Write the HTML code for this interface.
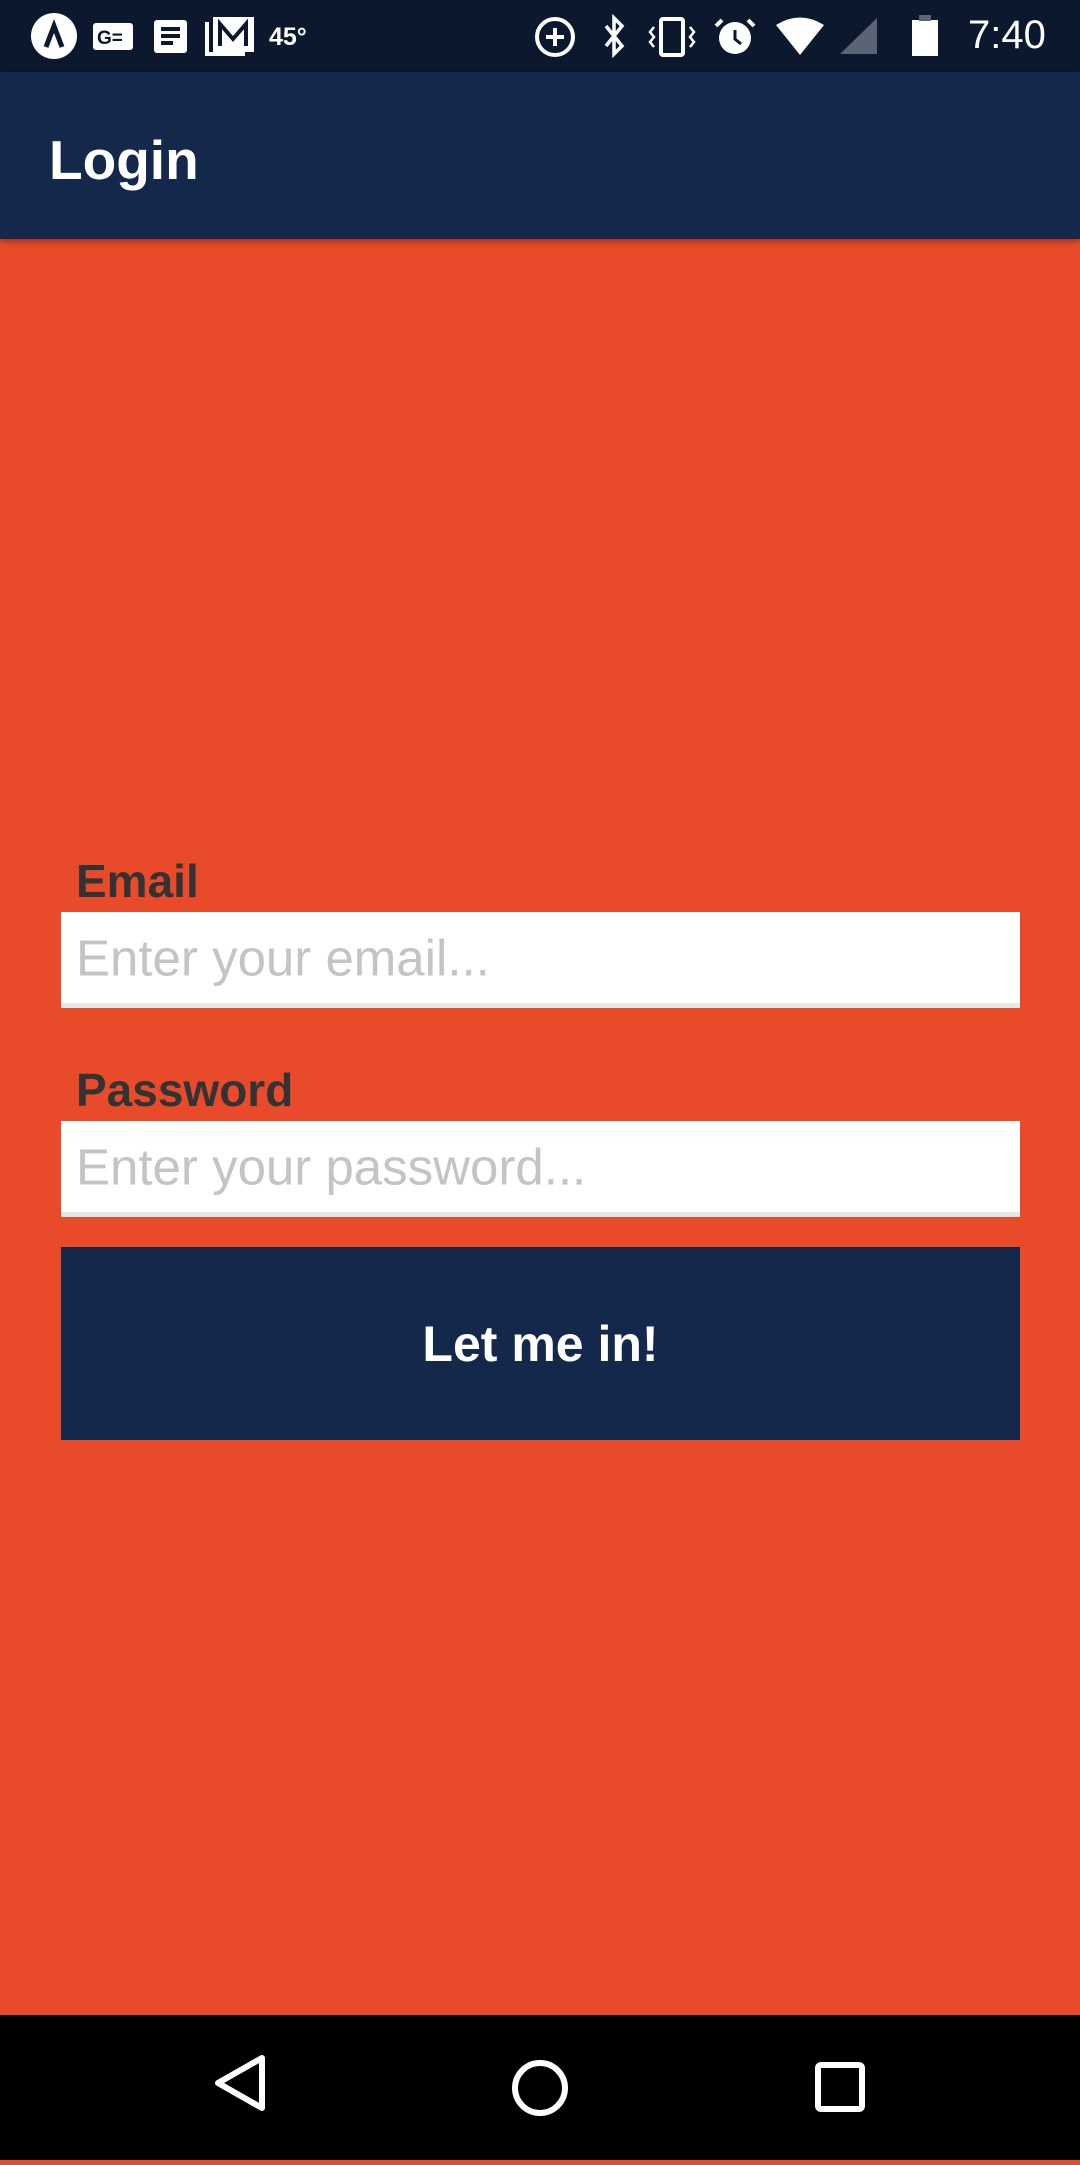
<!DOCTYPE html>
<html><head><meta charset="utf-8"><style>
*{margin:0;padding:0;box-sizing:border-box}
body{width:1080px;height:2160px;background:#E94B2A;font-family:"Liberation Sans",sans-serif;position:relative;overflow:hidden}
.sb{position:absolute;top:0;left:0;width:1080px;height:72px;background:#0C182D;color:#fff}
.ab{position:absolute;top:72px;left:0;width:1080px;height:167px;background:#14284B;box-shadow:0 3px 6px rgba(0,0,0,.3)}
.ab span{position:absolute;left:49px;top:124px;transform:translateY(-50%);font-size:55px;font-weight:bold;color:#fff;top:88px}
.lbl{position:absolute;left:76px;font-size:46px;font-weight:bold;color:#333}
.inp{position:absolute;left:61px;width:959px;height:96px;background:#fff;border-bottom:5px solid #e6e6e6}
.inp span{position:absolute;left:15px;top:50%;transform:translateY(-50%);font-size:51px;color:#c4c4c4}
.btn{position:absolute;left:61px;top:1247px;width:959px;height:193px;background:#14284B;color:#fff;font-size:50px;font-weight:bold;display:flex;align-items:center;justify-content:center}
.nav{position:absolute;left:0;top:2015px;width:1080px;height:145px;background:#000}
</style></head><body>
<div class="sb">
<svg width="1080" height="72" style="position:absolute;left:0;top:0">
<circle cx="54" cy="36" r="23" fill="#fff"/><path d="M46 47 L54 26 L62 47" stroke="#0C182D" stroke-width="5" fill="none"/>
<rect x="93" y="23" width="40" height="27" rx="3" fill="#fff"/>
<text x="97" y="44" font-size="19" font-weight="bold" fill="#0C182D" font-family="Liberation Sans">G=</text>
<rect x="154" y="20" width="33" height="33" rx="3" fill="#fff"/>
<path d="M161 29h19M161 36h19M161 43h12" stroke="#0C182D" stroke-width="4"/>
<rect x="213" y="17" width="41" height="35" fill="#fff"/><path d="M207 22v32h38" stroke="#fff" stroke-width="4" fill="none"/>
<path d="M220 46V24l13 15 13-15v22" stroke="#0C182D" stroke-width="4" fill="none"/>
<text x="269" y="45" font-size="25" font-weight="bold" fill="#fff" font-family="Liberation Sans">45°</text>
<circle cx="555" cy="37" r="18" stroke="#fff" stroke-width="4" fill="none"/><path d="M555 28v18M546 37h18" stroke="#fff" stroke-width="4"/>
<path d="M606 26l16 20-8 8V18l8 8-16 20" stroke="#fff" stroke-width="3.5" fill="none"/>
<rect x="661" y="19" width="22" height="36" rx="2" stroke="#fff" stroke-width="4" fill="none"/>
<path d="M654 27l-4 5 4 5-4 5 4 5M690 27l4 5-4 5 4 5-4 5" stroke="#fff" stroke-width="2.5" fill="none"/>
<circle cx="735" cy="38" r="16" fill="#fff"/><path d="M735 30v9l6 5" stroke="#0C182D" stroke-width="3" fill="none"/>
<path d="M722 20l-6 6M748 20l6 6" stroke="#fff" stroke-width="4"/>
<path d="M776 25 Q800 10 824 25 L800 55Z" fill="#fff"/>
<path d="M840 54 L877 18 V54Z" fill="#5a6475"/>
<rect x="912" y="20" width="26" height="36" fill="#fff"/><rect x="919" y="15" width="12" height="6" fill="#5a6475"/>
<text x="968" y="48" font-size="40" fill="#fff" font-family="Liberation Sans">7:40</text>
</svg></div>
<div class="ab"><span>Login</span></div>
<div class="lbl" style="top:854px">Email</div>
<div class="inp" style="top:912px"><span>Enter your email...</span></div>
<div class="lbl" style="top:1063px">Password</div>
<div class="inp" style="top:1121px"><span>Enter your password...</span></div>
<div class="btn">Let me in!</div>
<div class="nav">
<svg width="1080" height="145">
<path d="M262 68 L218 93 L262 118Z" stroke="#fff" stroke-width="6" fill="none" stroke-linejoin="round" transform="translate(0,-25)"/>
<circle cx="540" cy="73" r="25" stroke="#fff" stroke-width="6" fill="none"/>
<rect x="818" y="50" width="44" height="44" rx="3" stroke="#fff" stroke-width="6" fill="none"/>
</svg></div>
</body></html>
